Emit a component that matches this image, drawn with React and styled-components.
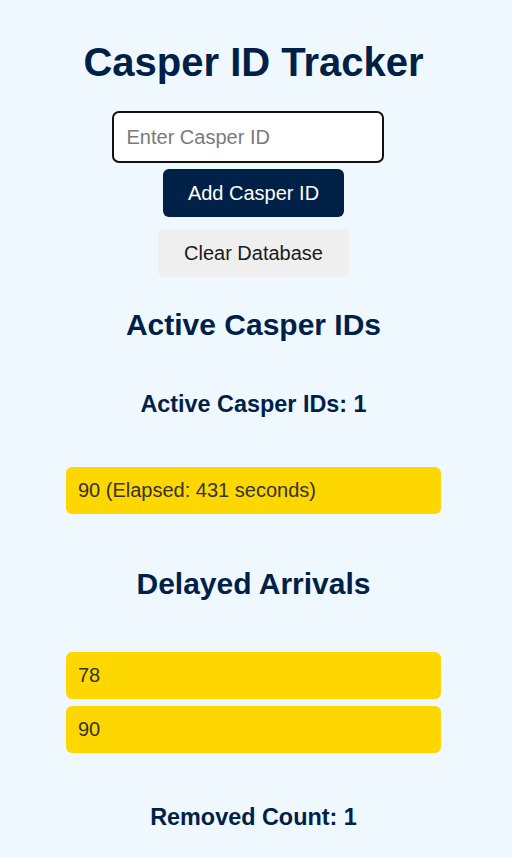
import React from "react";
import styled, { createGlobalStyle } from "styled-components";

const Global = createGlobalStyle`
  html, body { margin: 0; padding: 0; background: #f0f8ff; }
  body { font-family: "Liberation Sans", Arial, sans-serif; font-size: 20px; }
`;

const Page = styled.div`
  display: flex;
  flex-direction: column;
  align-items: center;
  padding: 40px 5px 24px 0;
  min-height: 858px;
  box-sizing: border-box;
`;

const Title = styled.h1`
  margin: 0 0 26px;
  font-size: 40px;
  font-weight: 700;
  color: #002147;
  line-height: normal;
`;

const Input = styled.input`
  box-sizing: border-box;
  width: 272px;
  height: 52px;
  margin: 0 12px 6px 0;
  padding: 0 13px;
  border: 2px solid #111;
  border-radius: 7px;
  background: #fff;
  font-family: inherit;
  font-size: 20px;
  color: #222;
  outline: none;
  &::placeholder { color: #7a7a7a; }
`;

const Button = styled.button`
  box-sizing: border-box;
  height: 48px;
  padding: 0 ${(p) => (p.$primary ? "25px" : "26px")};
  margin-bottom: ${(p) => (p.$primary ? "12px" : "0")};
  border: none;
  border-radius: 6px;
  font-family: inherit;
  font-size: 20px;
  background: ${(p) => (p.$primary ? "#002147" : "#efefef")};
  color: ${(p) => (p.$primary ? "#fff" : "#1a1a1a")};
  cursor: pointer;
`;

const SectionTitle = styled.h2`
  margin: ${(p) => p.$mt}px 0 0;
  font-size: 30px;
  font-weight: 700;
  color: #002147;
  line-height: normal;
`;

const Count = styled.h3`
  margin: ${(p) => p.$mt}px 0 0;
  font-size: 23.4px;
  font-weight: 700;
  color: #002147;
  line-height: normal;
`;

const List = styled.div`
  width: 375px;
  margin-top: ${(p) => p.$mt}px;
  display: flex;
  flex-direction: column;
  gap: 7px;
`;

const Item = styled.div`
  box-sizing: border-box;
  height: 47px;
  padding: 0 12px;
  display: flex;
  align-items: center;
  background: #ffd700;
  border-radius: 6px;
  color: #333;
  font-size: 20px;
`;

export default function App() {
  return (
    <>
      <Global />
      <Page>
        <Title>Casper ID Tracker</Title>
        <Input placeholder="Enter Casper ID" autoFocus />
        <Button $primary>Add Casper ID</Button>
        <Button>Clear Database</Button>
        <SectionTitle $mt={31}>Active Casper IDs</SectionTitle>
        <Count $mt={49}>Active Casper IDs: 1</Count>
        <List $mt={49}>
          <Item>90 (Elapsed: 431 seconds)</Item>
        </List>
        <SectionTitle $mt={53}>Delayed Arrivals</SectionTitle>
        <List $mt={51}>
          <Item>78</Item>
          <Item>90</Item>
        </List>
        <Count $mt={51}>Removed Count: 1</Count>
      </Page>
    </>
  );
}
